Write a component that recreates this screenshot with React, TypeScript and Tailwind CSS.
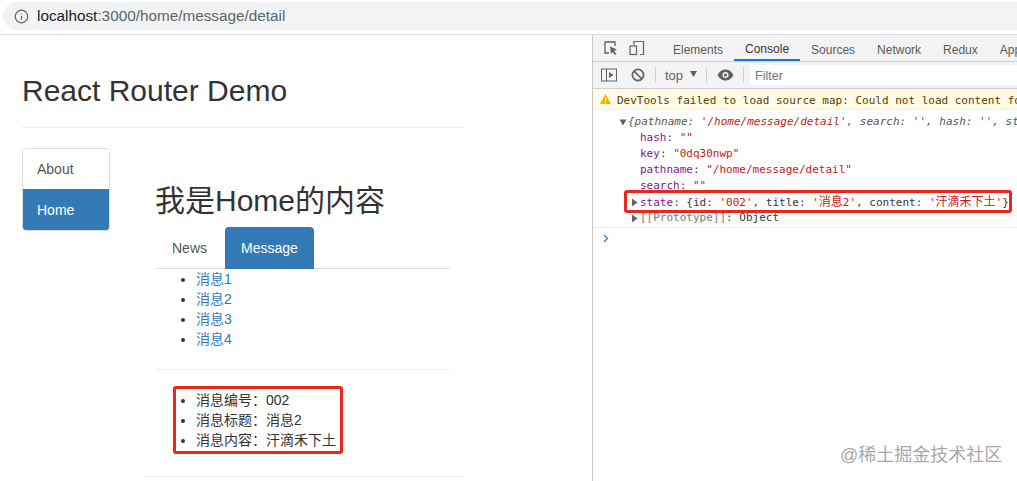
import { Info } from 'lucide-react';

const sans = '[font-family:"Liberation_Sans","Noto_Sans_CJK_SC",sans-serif]';
const mono = '[font-family:"DejaVu_Sans_Mono","Noto_Sans_CJK_SC",monospace]';

function Caret() {
  return (
    <svg width="7" height="9" viewBox="0 0 7 9" className="mr-[2px] shrink-0">
      <path d="M1 0.5 L6.5 4.5 L1 8.5 Z" fill="#5f6368" />
    </svg>
  );
}

function DevToolsIcons() {
  return (
    <div className="flex items-center">
      <svg width="16" height="16" viewBox="0 0 16 16" fill="none" className="ml-[10px]">
        <path d="M6 13H2V2h10v4" stroke="#5f6368" strokeWidth="1.3" />
        <path d="M7 6.5 L14 9.5 L11 11 L13.5 14 L12 15 L9.8 12 L8 14 Z" fill="#5f6368" />
      </svg>
      <svg width="16" height="16" viewBox="0 0 16 16" fill="none" className="ml-[10px]">
        <path d="M5 5V1.5h9.5v13H11" stroke="#5f6368" strokeWidth="1.2" />
        <rect x="1" y="6" width="6.5" height="8.5" stroke="#5f6368" strokeWidth="1.2" />
      </svg>
    </div>
  );
}

function ConsoleToolbar() {
  return (
    <div className="flex h-[27px] items-center border-b border-[#d0d0d0] bg-[#f3f3f3]">
      <svg width="16" height="14" viewBox="0 0 16 14" fill="none" className="ml-[8px]">
        <rect x="0.5" y="1" width="15" height="12" stroke="#5f6368" />
        <path d="M5.5 1v12" stroke="#5f6368" />
        <path d="M8 4 L12.5 7 L8 10 Z" fill="#5f6368" />
      </svg>
      <svg width="14" height="14" viewBox="0 0 14 14" fill="none" className="ml-[14px]">
        <circle cx="7" cy="7" r="5.6" stroke="#5f6368" strokeWidth="1.7" />
        <path d="M3 3 L11 11" stroke="#5f6368" strokeWidth="1.7" />
      </svg>
      <div className="ml-[10px] h-[16px] w-px bg-[#d0d0d0]" />
      <span className={`ml-[9px] pt-[2px] text-[13px] text-[#5f6368] ${sans}`}>top</span>
      <svg width="8" height="6" viewBox="0 0 8 6" className="mb-[2px] ml-[7px]">
        <path d="M0 0 H7 L3.5 6 Z" fill="#5f6368" />
      </svg>
      <div className="ml-[8px] h-[16px] w-px bg-[#d0d0d0]" />
      <svg width="17" height="12" viewBox="0 0 17 12" className="ml-[10px]">
        <path d="M0.5 6 C3 1.5 6 0.5 8.5 0.5 C11 0.5 14 1.5 16.5 6 C14 10.5 11 11.5 8.5 11.5 C6 11.5 3 10.5 0.5 6 Z" fill="#5f6368" />
        <circle cx="8.5" cy="6" r="3" fill="#f3f3f3" />
        <circle cx="8.5" cy="6" r="1.6" fill="#5f6368" />
      </svg>
      <div className="ml-[9px] h-[16px] w-px bg-[#d0d0d0]" />
      <div className={`ml-[6px] flex h-[20px] flex-1 items-center bg-white pl-[5px] pt-[2px] text-[12.5px] text-[#757575] ${sans}`}>
        Filter
      </div>
    </div>
  );
}

function DevTools() {
  const tabs = ['Elements', 'Console', 'Sources', 'Network', 'Redux', 'App'];
  return (
    <div className="flex w-[425px] shrink-0 flex-col overflow-hidden border-l border-[#c8c8c8] bg-white">
      <div className="flex h-[27px] items-center border-b border-[#d0d0d0] bg-[#f3f3f3]">
        <DevToolsIcons />
        <div className="ml-[11px] h-[16px] w-px bg-[#d0d0d0]" />
        <div className={`ml-[6px] flex h-full text-[12px] text-[#5a5a5a] ${sans}`}>
          {tabs.map((tab) => (
            <div
              key={tab}
              className={`flex items-center whitespace-nowrap px-[11px] pt-[3px] ${
                tab === 'Console' ? 'border-b-2 border-[#1a73e8] text-[#333]' : ''
              }`}
            >
              {tab}
            </div>
          ))}
        </div>
      </div>
      <ConsoleToolbar />
      <div className={`whitespace-nowrap text-[11px] leading-[16px] ${mono}`}>
        <div className="flex h-[21px] items-center border-b border-[#fff5c2] bg-[#fffbe5] pl-[7px] pt-[3px] text-[#5c3c00]">
          <svg width="11" height="10" viewBox="0 0 11 10" className="mb-[3px] mr-[6px] shrink-0">
            <path d="M5.5 0 L11 10 H0 Z" fill="#f4b400" />
            <path d="M5 3.5 h1 v3.5 h-1 z M5 7.8 h1 v1 h-1 z" fill="#fff" />
          </svg>
          DevTools failed to load source map: Could not load content for
        </div>
        <div className="border-b border-[#ececec] pb-[1px] pt-[4px]">
          <div className="flex h-[16px] items-center pl-[26px] italic text-[#555]">
            <svg width="8" height="7" viewBox="0 0 8 7" className="mr-[1px] shrink-0">
              <path d="M0.5 0.5 H7.5 L4 6.5 Z" fill="#5f6368" />
            </svg>
            <span>
              {'{pathname: '}
              <span className="text-[#c41a16]">'/home/message/detail'</span>
              {', search: '}
              <span className="text-[#c41a16]">''</span>
              {', hash: '}
              <span className="text-[#c41a16]">''</span>
              {', st'}
            </span>
          </div>
          {[
            ['hash', '""'],
            ['key', '"0dq30nwp"'],
            ['pathname', '"/home/message/detail"'],
            ['search', '""'],
          ].map(([k, v]) => (
            <div key={k} className="h-[16px] pl-[47px]">
              <span className="text-[#881391]">{k}</span>
              <span className="text-[#303942]">: </span>
              <span className="text-[#c41a16]">{v}</span>
            </div>
          ))}
          <div className="flex h-[16px] items-center pl-[38px]">
            <Caret />
            <span>
              <span className="text-[#881391]">state</span>
              <span className="text-[#303942]">{': {id: '}</span>
              <span className="text-[#c41a16]">'002'</span>
              <span className="text-[#303942]">{', title: '}</span>
              <span className="text-[#c41a16]">
                '<span className="text-[12px]">消息</span>2'
              </span>
              <span className="text-[#303942]">{', content: '}</span>
              <span className="text-[#c41a16]">
                '<span className="text-[12px]">汗滴禾下土</span>'
              </span>
              <span className="text-[#303942]">{'}'}</span>
            </span>
          </div>
          <div className="flex h-[16px] items-center pl-[38px] text-[#303942]">
            <Caret />
            <span>
              <span className="text-[#777]">[[Prototype]]</span>: Object
            </span>
          </div>
        </div>
        <div className="pl-[10px] pt-[6px]">
          <svg width="6" height="9" viewBox="0 0 6 9" fill="none">
            <path d="M1 1 L4.5 4.5 L1 8" stroke="#367cf1" strokeWidth="1.4" />
          </svg>
        </div>
      </div>
    </div>
  );
}

function Page() {
  return (
    <div className={`w-[592px] shrink-0 overflow-hidden bg-white pl-[22px] text-[14px] leading-[20px] text-[#333] ${sans}`}>
      <div className="h-[93px] w-[442px] whitespace-nowrap border-b border-[#eee] pt-[39px] text-[30px] leading-[33px]">React Router Demo</div>
      <div className="flex pt-[20px]">
        <div className="h-[83px] w-[88px] shrink-0 overflow-hidden rounded-[4px] border border-[#ddd]">
          <div className="h-[40px] bg-white pl-[14px] pt-[10px] text-[#555]">About</div>
          <div className="h-[42px] bg-[#337ab7] pl-[14px] pt-[11px] text-white">Home</div>
        </div>
        <div className="ml-[46px] w-[294px] shrink-0">
          <div className="-ml-[1px] pt-[36px] text-[30px] leading-[33px]">我是Home的内容</div>
          <div className="mt-[10px] flex h-[42px] border-b border-[#ddd]">
            <div className="px-[16px] pt-[11px] text-[#555]">News</div>
            <div className="ml-[2px] h-[42px] rounded-t-[4px] bg-[#337ab7] px-[16px] pt-[11px] text-white">Message</div>
          </div>
          <ul className="list-disc pl-[40px] text-[#337ab7] marker:text-[#333]">
            {['消息1', '消息2', '消息3', '消息4'].map((m) => (
              <li key={m}>{m}</li>
            ))}
          </ul>
          <div className="mt-[20px] border-t border-[#eee] pt-[16px]">
            <ul className="ml-[17px] w-[170px] list-disc rounded-[3px] border-[3px] border-[#e8281c] py-[1px] pl-[20px] leading-[20px]">
              <li>消息编号：002</li>
              <li>消息标题：消息2</li>
              <li>消息内容：汗滴禾下土</li>
            </ul>
          </div>
          <div className="-ml-[13px] mt-[22px] w-[320px] border-t border-[#eee]" />
        </div>
      </div>
    </div>
  );
}

export default function App() {
  return (
    <div className="relative flex h-[481px] w-[1017px] flex-col overflow-hidden bg-white">
      <div className="flex h-[35px] shrink-0 items-center border-b border-[#dadce0] bg-white pb-[2px] pl-[3px]">
        <div className={`flex h-[28px] flex-1 items-center rounded-l-[14px] bg-[#f1f3f4] pl-[11px] text-[15.3px] text-[#5f6368] ${sans}`}>
          <Info size={15} strokeWidth={2} color="#5f6368" />
          <span className="ml-[8px]">
            <span className="text-[#202124]">localhost</span>:3000/home/message/detail
          </span>
        </div>
      </div>
      <div className="flex min-h-0 flex-1">
        <Page />
        <DevTools />
      </div>
      {/* highlight round the state row in the console */}
      <div className="absolute left-[624px] top-[190px] h-[23px] w-[388px] rounded-[3px] border-[3px] border-[#e8281c]" />
      <div className={`absolute left-[840px] top-[445px] text-[18px] leading-[20px] text-[#a8a8a8] ${sans}`}>@稀土掘金技术社区</div>
    </div>
  );
}
